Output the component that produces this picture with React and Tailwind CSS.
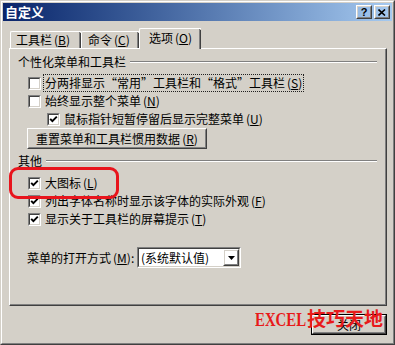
import React from 'react';

const font = "font-['Noto_Sans_CJK_SC','Noto_Sans',sans-serif]";

function Key({ k }) {
  return (
    <span className="ml-[2px]">
      (<span className="underline underline-offset-[1px]">{k}</span>)
    </span>
  );
}

function Check({ on }) {
  return (
    <span className="flex w-[13px] h-[13px] shrink-0 border border-t-[#808080] border-l-[#808080] border-r-white border-b-white">
      <span className="flex flex-1 items-center justify-center bg-white border border-t-[#404040] border-l-[#404040] border-r-[#d4d0c8] border-b-[#d4d0c8]">
        {on && (
          <svg width="9" height="9" viewBox="0 0 9 9">
            <polyline points="1.2,3.8 3.4,6.2 7.8,1.6" fill="none" stroke="#000" strokeWidth="1.9" />
          </svg>
        )}
      </span>
    </span>
  );
}

function Row({ on, indent, children, focus }) {
  return (
    <div className={`flex h-[18px] items-center gap-[2px] ${indent ? 'pl-[37px]' : 'pl-[18px]'}`}>
      <Check on={on} />
      <span className={`leading-[16px] px-[1px] border ${focus ? 'border-dotted border-[#202020]' : 'border-transparent'}`}>
        {children}
      </span>
    </div>
  );
}

function Heading({ children }) {
  return (
    <div className="flex h-[14px] items-center pl-[8px] pr-[8px]">
      <span className="leading-[14px]">{children}</span>
      <div className="ml-[4px] flex-1 h-[2px] border-t border-t-[#808080] border-b border-b-white" />
    </div>
  );
}

function Raised({ className, children, dflt }) {
  return (
    <div className={`${dflt ? 'border border-black' : ''} ${className}`}>
      <div className="h-full border border-t-white border-l-white border-r-[#404040] border-b-[#404040]">
        <div className="h-full flex items-center justify-center border border-t-[#d4d0c8] border-l-[#d4d0c8] border-r-[#808080] border-b-[#808080]">
          {children}
        </div>
      </div>
    </div>
  );
}

export default function App() {
  return (
    <div className={`relative w-[395px] h-[345px] bg-[#d4d0c8] text-[12px] text-black ${font} overflow-hidden`}>
      <div className="h-full border border-t-[#d4d0c8] border-l-[#d4d0c8] border-r-[#404040] border-b-[#404040]">
        <div className="h-full border border-t-white border-l-white border-r-[#808080] border-b-[#808080] p-[1px] flex flex-col">
          {/* title bar */}
          <div className="h-[18px] flex items-center bg-gradient-to-r from-[#0a246a] to-[#a6caf0] pl-[2px] pr-[2px]">
            <span className="text-white font-bold text-[13px] leading-[16px]">自定义</span>
            <div className="ml-auto flex gap-[2px]">
              <Raised className="w-[16px] h-[14px]">
                <span className="text-[11px] font-bold leading-[10px] font-['Liberation_Sans',sans-serif]">?</span>
              </Raised>
              <Raised className="w-[16px] h-[14px]">
                <svg width="8" height="7" viewBox="0 0 8 7">
                  <path d="M0.5 0.5 L7 6.5 M7 0.5 L0.5 6.5" stroke="#000" strokeWidth="1.6" />
                </svg>
              </Raised>
            </div>
          </div>

          {/* tabs */}
          <div className="h-[27px] flex items-end pl-[7px] relative z-10">
            <div className="w-[71px] h-[17px] border-l border-t border-white rounded-tl-[2px] flex">
              <div className="flex-1 border-r border-[#808080] flex items-center pl-[5px] leading-[14px]">
                工具栏<Key k="B" />
              </div>
              <div className="w-[1px] bg-[#404040] mt-[1px]" />
            </div>
            <div className="w-[58px] h-[17px] border-l border-t border-white rounded-tl-[2px] flex">
              <div className="flex-1 border-r border-[#808080] flex items-center pl-[6px] leading-[14px]">
                命令<Key k="C" />
              </div>
              <div className="w-[1px] bg-[#404040] mt-[1px]" />
            </div>
            <div className="w-[62px] h-[21px] -mb-[1px] bg-[#d4d0c8] border-l border-t border-white rounded-tl-[2px] flex">
              <div className="flex-1 border-r border-[#808080] flex items-center pl-[9px] pb-[2px] leading-[14px]">
                选项<Key k="O" />
              </div>
              <div className="w-[1px] bg-[#404040] mt-[1px]" />
            </div>
          </div>

          {/* panel */}
          <div className="ml-[6px] w-[378px] h-[258px] border border-t-white border-l-white border-r-[#404040] border-b-[#404040]">
            <div className="h-full border-r border-b border-r-[#808080] border-b-[#808080] flex flex-col pt-[6px]">
              <Heading>个性化菜单和工具栏</Heading>
              <div className="mt-[5px]">
                <Row on={false} focus>
                  分两排显示“常用”工具栏和“格式”工具栏<Key k="S" />
                </Row>
                <Row on={false}>
                  始终显示整个菜单<Key k="N" />
                </Row>
                <Row on indent>
                  鼠标指针短暂停留后显示完整菜单<Key k="U" />
                </Row>
              </div>
              <Raised className="ml-[17px] w-[180px] h-[21px]">
                <span className="leading-[14px]">重置菜单和工具栏惯用数据<Key k="R" /></span>
              </Raised>
              <div className="mt-[5px]">
                <Heading>其他</Heading>
              </div>
              <div className="mt-[6px]">
                <Row on>
                  大图标<Key k="L" />
                </Row>
                <Row on>
                  列出字体名称时显示该字体的实际外观<Key k="F" />
                </Row>
                <Row on>
                  显示关于工具栏的屏幕提示<Key k="T" />
                </Row>
              </div>
              <div className="mt-[19px] flex items-center pl-[17px] h-[21px]">
                <span className="w-[110px] leading-[14px]">菜单的打开方式<Key k="M" />:</span>
                <div className="w-[104px] h-[21px] border border-t-[#808080] border-l-[#808080] border-r-white border-b-white">
                  <div className="h-full flex items-center bg-white border border-t-[#404040] border-l-[#404040] border-r-[#d4d0c8] border-b-[#d4d0c8]">
                    <span className="pl-[2px] leading-[14px] flex-1">(系统默认值)</span>
                    <Raised className="w-[16px] h-[17px]">
                      <svg width="7" height="4" viewBox="0 0 7 4">
                        <path d="M0 0 H7 L3.5 4 Z" fill="#000" />
                      </svg>
                    </Raised>
                  </div>
                </div>
              </div>
            </div>
          </div>

          {/* bottom */}
          <div className="flex justify-end mt-[8px] pr-[5px]">
            <Raised dflt className="w-[76px] h-[21px]">
              <span className="leading-[14px]">关闭</span>
            </Raised>
          </div>
        </div>
      </div>

      {/* annotation overlays */}
      <div className="absolute left-[9px] top-[167px] w-[110px] h-[32px] border-[3px] border-[#e8141c] rounded-[9px]" />
      <div className="absolute left-[255px] top-[307px] flex items-baseline font-bold leading-[22px] text-[#e81a1a] whitespace-nowrap">
        <span className="inline-block w-[52px] text-[19px] origin-left scale-x-[0.78] font-['Liberation_Serif',serif]">EXCEL</span>
        <span className="text-[19px] font-['Noto_Sans_CJK_SC',serif]">技巧天地</span>
      </div>
    </div>
  );
}
